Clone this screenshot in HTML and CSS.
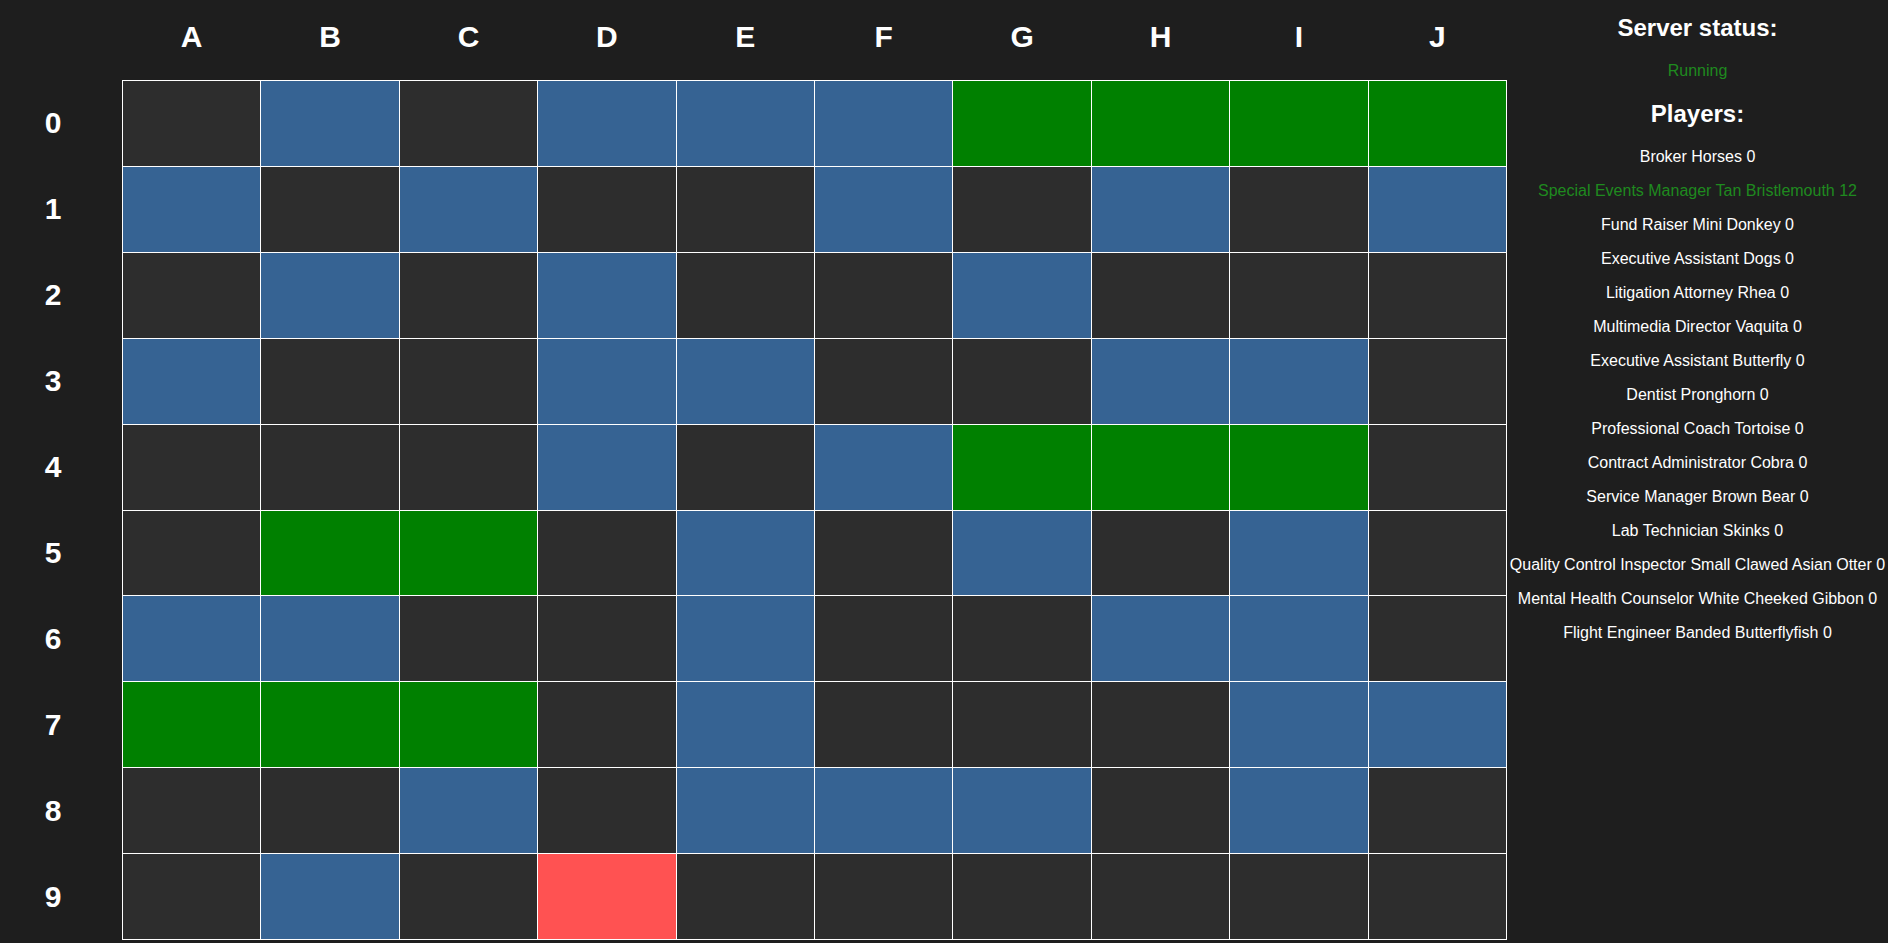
FILE: index.html
```html
<!DOCTYPE html>
<html>
<head>
<meta charset="utf-8">
<title>Board</title>
<link rel="stylesheet" href="styles.css">
</head>
<body>
<div class="page">
  <div class="board">
    <div class="corner"></div>
    <div class="col-heads">
      <div class="head">A</div><div class="head">B</div><div class="head">C</div><div class="head">D</div><div class="head">E</div>
      <div class="head">F</div><div class="head">G</div><div class="head">H</div><div class="head">I</div><div class="head">J</div>
    </div>
    <div class="row-heads">
      <div class="rhead">0</div><div class="rhead">1</div><div class="rhead">2</div><div class="rhead">3</div><div class="rhead">4</div>
      <div class="rhead">5</div><div class="rhead">6</div><div class="rhead">7</div><div class="rhead">8</div><div class="rhead">9</div>
    </div>
    <div class="cells">
      <div class="c"></div><div class="c b"></div><div class="c"></div><div class="c b"></div><div class="c b"></div><div class="c b"></div><div class="c g"></div><div class="c g"></div><div class="c g"></div><div class="c g"></div>
      <div class="c b"></div><div class="c"></div><div class="c b"></div><div class="c"></div><div class="c"></div><div class="c b"></div><div class="c"></div><div class="c b"></div><div class="c"></div><div class="c b"></div>
      <div class="c"></div><div class="c b"></div><div class="c"></div><div class="c b"></div><div class="c"></div><div class="c"></div><div class="c b"></div><div class="c"></div><div class="c"></div><div class="c"></div>
      <div class="c b"></div><div class="c"></div><div class="c"></div><div class="c b"></div><div class="c b"></div><div class="c"></div><div class="c"></div><div class="c b"></div><div class="c b"></div><div class="c"></div>
      <div class="c"></div><div class="c"></div><div class="c"></div><div class="c b"></div><div class="c"></div><div class="c b"></div><div class="c g"></div><div class="c g"></div><div class="c g"></div><div class="c"></div>
      <div class="c"></div><div class="c g"></div><div class="c g"></div><div class="c"></div><div class="c b"></div><div class="c"></div><div class="c b"></div><div class="c"></div><div class="c b"></div><div class="c"></div>
      <div class="c b"></div><div class="c b"></div><div class="c"></div><div class="c"></div><div class="c b"></div><div class="c"></div><div class="c"></div><div class="c b"></div><div class="c b"></div><div class="c"></div>
      <div class="c g"></div><div class="c g"></div><div class="c g"></div><div class="c"></div><div class="c b"></div><div class="c"></div><div class="c"></div><div class="c"></div><div class="c b"></div><div class="c b"></div>
      <div class="c"></div><div class="c"></div><div class="c b"></div><div class="c"></div><div class="c b"></div><div class="c b"></div><div class="c b"></div><div class="c"></div><div class="c b"></div><div class="c"></div>
      <div class="c"></div><div class="c b"></div><div class="c"></div><div class="c r"></div><div class="c"></div><div class="c"></div><div class="c"></div><div class="c"></div><div class="c"></div><div class="c"></div>
    </div>
  </div>
  <div class="panel">
    <h2 class="title">Server status:</h2>
    <p class="status">Running</p>
    <h2 class="title players-title">Players:</h2>
    <div class="players">
      <p class="player">Broker Horses 0</p>
      <p class="player me">Special Events Manager Tan Bristlemouth 12</p>
      <p class="player">Fund Raiser Mini Donkey 0</p>
      <p class="player">Executive Assistant Dogs 0</p>
      <p class="player">Litigation Attorney Rhea 0</p>
      <p class="player">Multimedia Director Vaquita 0</p>
      <p class="player">Executive Assistant Butterfly 0</p>
      <p class="player">Dentist Pronghorn 0</p>
      <p class="player">Professional Coach Tortoise 0</p>
      <p class="player">Contract Administrator Cobra 0</p>
      <p class="player">Service Manager Brown Bear 0</p>
      <p class="player">Lab Technician Skinks 0</p>
      <p class="player">Quality Control Inspector Small Clawed Asian Otter 0</p>
      <p class="player">Mental Health Counselor White Cheeked Gibbon 0</p>
      <p class="player">Flight Engineer Banded Butterflyfish 0</p>
    </div>
  </div>
</div>
</body>
</html>
```
FILE: styles.css
```css
html, body {
  margin: 0;
  padding: 0;
  background: #1e1e1e;
  color: #ffffff;
  font-family: "Liberation Sans", Arial, sans-serif;
  overflow: hidden;
}

.page {
  display: flex;
  width: 1888px;
  height: 943px;
}

.board {
  display: grid;
  grid-template-columns: 106px 1385px;
  grid-template-rows: 80px 860px;
  column-gap: 16px;
  width: 1507px;
  flex: none;
}

.col-heads {
  display: grid;
  grid-template-columns: repeat(10, 1fr);
  column-gap: 1px;
  padding: 0 1px 7px;
  box-sizing: border-box;
}

.head {
  display: flex;
  align-items: center;
  justify-content: center;
  font-size: 30px;
  font-weight: bold;
}

.row-heads {
  display: grid;
  grid-template-rows: repeat(10, 1fr);
  row-gap: 1px;
  padding: 1px 0;
}

.rhead {
  display: flex;
  align-items: center;
  justify-content: center;
  font-size: 30px;
  font-weight: bold;
}

.cells {
  display: grid;
  grid-template-columns: repeat(10, 1fr);
  grid-template-rows: repeat(10, 1fr);
  gap: 1px;
  padding: 1px;
  background: #ffffff;
}

.c { background: #2d2d2d; }
.c.b { background: #366393; }
.c.g { background: #008000; }
.c.r { background: #ff5252; }

.panel {
  flex: 1;
  display: flex;
  flex-direction: column;
  align-items: center;
  padding-top: 14px;
  text-align: center;
  white-space: nowrap;
}

.title {
  margin: 0;
  font-size: 24px;
  line-height: 28px;
  font-weight: bold;
}

.status {
  margin: 20px 0 0;
  font-size: 16px;
  line-height: 18px;
  color: #1f8a1f;
}

.players-title {
  margin-top: 20px;
}

.players {
  display: flex;
  flex-direction: column;
  align-items: center;
  gap: 16px;
  margin-top: 20px;
}

.player {
  margin: 0;
  font-size: 16px;
  line-height: 18px;
}

.player.me { color: #1f8a1f; }
```
